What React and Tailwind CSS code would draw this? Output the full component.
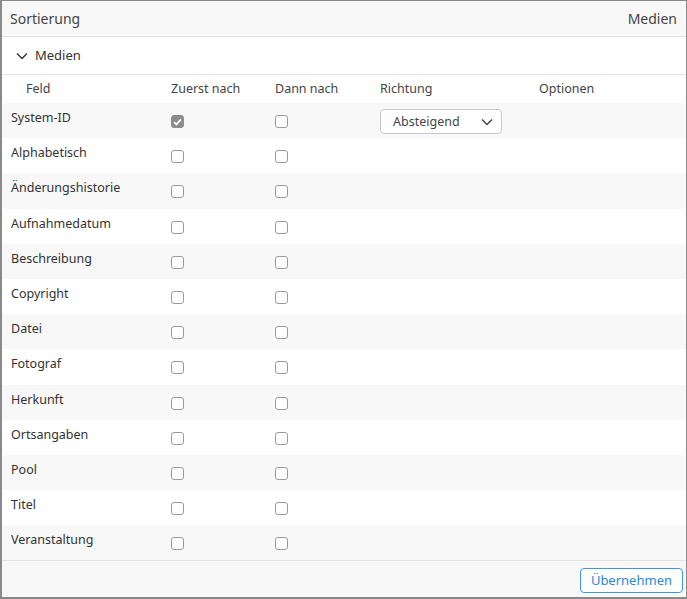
import React, { useState } from 'react';

const fields = [
    'System-ID',
    'Alphabetisch',
    'Änderungshistorie',
    'Aufnahmedatum',
    'Beschreibung',
    'Copyright',
    'Datei',
    'Fotograf',
    'Herkunft',
    'Ortsangaben',
    'Pool',
    'Titel',
    'Veranstaltung',
];

const Box = ({ checked }) => (
    <span
        className={`inline-flex items-center justify-center w-[13px] h-[13px] rounded-[3px] border ${checked
            ? 'bg-[#8c8c8c] border-[#8c8c8c]'
            : 'bg-white border-[#9a9a9a]'
            }`}
    >
        {checked && (
            <svg width="9" height="8" viewBox="0 0 9 8" fill="none">
                <path d="M1 4.2 L3.4 6.4 L8 1.4" stroke="white" strokeWidth="1.8" />
            </svg>
        )}
    </span>
);

const Chevron = ({ className }) => (
    <svg className={className} width="12" height="8" viewBox="0 0 12 8" fill="none">
        <path d="M1 1.5 L6 6.5 L11 1.5" stroke="currentColor" strokeWidth="1.4" />
    </svg>
);

export default function App() {
    const [open] = useState(true);

    return (
        <div
            className="w-[687px] h-[599px] flex flex-col bg-white border border-l-2 border-b-2 border-[#8a8a8a] text-[#333] overflow-hidden"
            style={{ fontFamily: '"Noto Sans", "Open Sans", sans-serif' }}
        >
            {/* title bar */}
            <div className="h-[36px] shrink-0 flex items-center justify-between pl-[8px] pr-[9px] bg-[#f8f8f8] border-b border-[#e3e3e3] text-[14px] text-[#444]">
                <span>Sortierung</span>
                <span>Medien</span>
            </div>

            {/* group header */}
            <div className="h-[38px] shrink-0 flex items-center gap-[7px] pl-[14px] pt-[1px] border-b border-[#e3e3e3] text-[13px] text-[#333]">
                <Chevron className="text-[#333]" />
                <span>Medien</span>
            </div>

            {open && (
                <div className="flex-1 text-[12.5px]">
                    <div className="h-[28px] flex items-center text-[#444]">
                        <div className="w-[169px] pl-[24px]">Feld</div>
                        <div className="w-[104px]">Zuerst nach</div>
                        <div className="w-[105px]">Dann nach</div>
                        <div className="w-[159px]">Richtung</div>
                        <div>Optionen</div>
                    </div>
                    {fields.map((f, i) => (
                        <div
                            key={f}
                            className={`h-[35.2px] flex items-start ${i % 2 === 0 ? 'bg-[#f8f8f8]' : 'bg-white'}`}
                        >
                            <div className="w-[169px] pl-[9px] pt-[6px] text-[#333]">{f}</div>
                            <div className="w-[104px] pt-[12px] flex"><Box checked={i === 0} /></div>
                            <div className="w-[105px] pt-[12px] flex"><Box /></div>
                            <div className="w-[159px] pt-[6px]">
                                {i === 0 && (
                                    <div className="w-[122px] h-[25px] flex items-center justify-between pl-[12px] pr-[8px] pt-[1px] rounded-[4px] border border-[#c8c8c8] bg-white text-[#444]">
                                        <span>Absteigend</span>
                                        <Chevron className="text-[#444]" />
                                    </div>
                                )}
                            </div>
                        </div>
                    ))}
                </div>
            )}

            {/* footer */}
            <div className="h-[37px] shrink-0 flex items-center justify-end pr-[3px] pt-[2px] bg-[#f8f8f8] border-t border-[#e3e3e3]">
                <button className="h-[25px] px-[10px] rounded-[4px] border border-[#3d97e0] bg-white text-[13px] text-[#2b87d8]">
                    Übernehmen
                </button>
            </div>
        </div>
    );
}
